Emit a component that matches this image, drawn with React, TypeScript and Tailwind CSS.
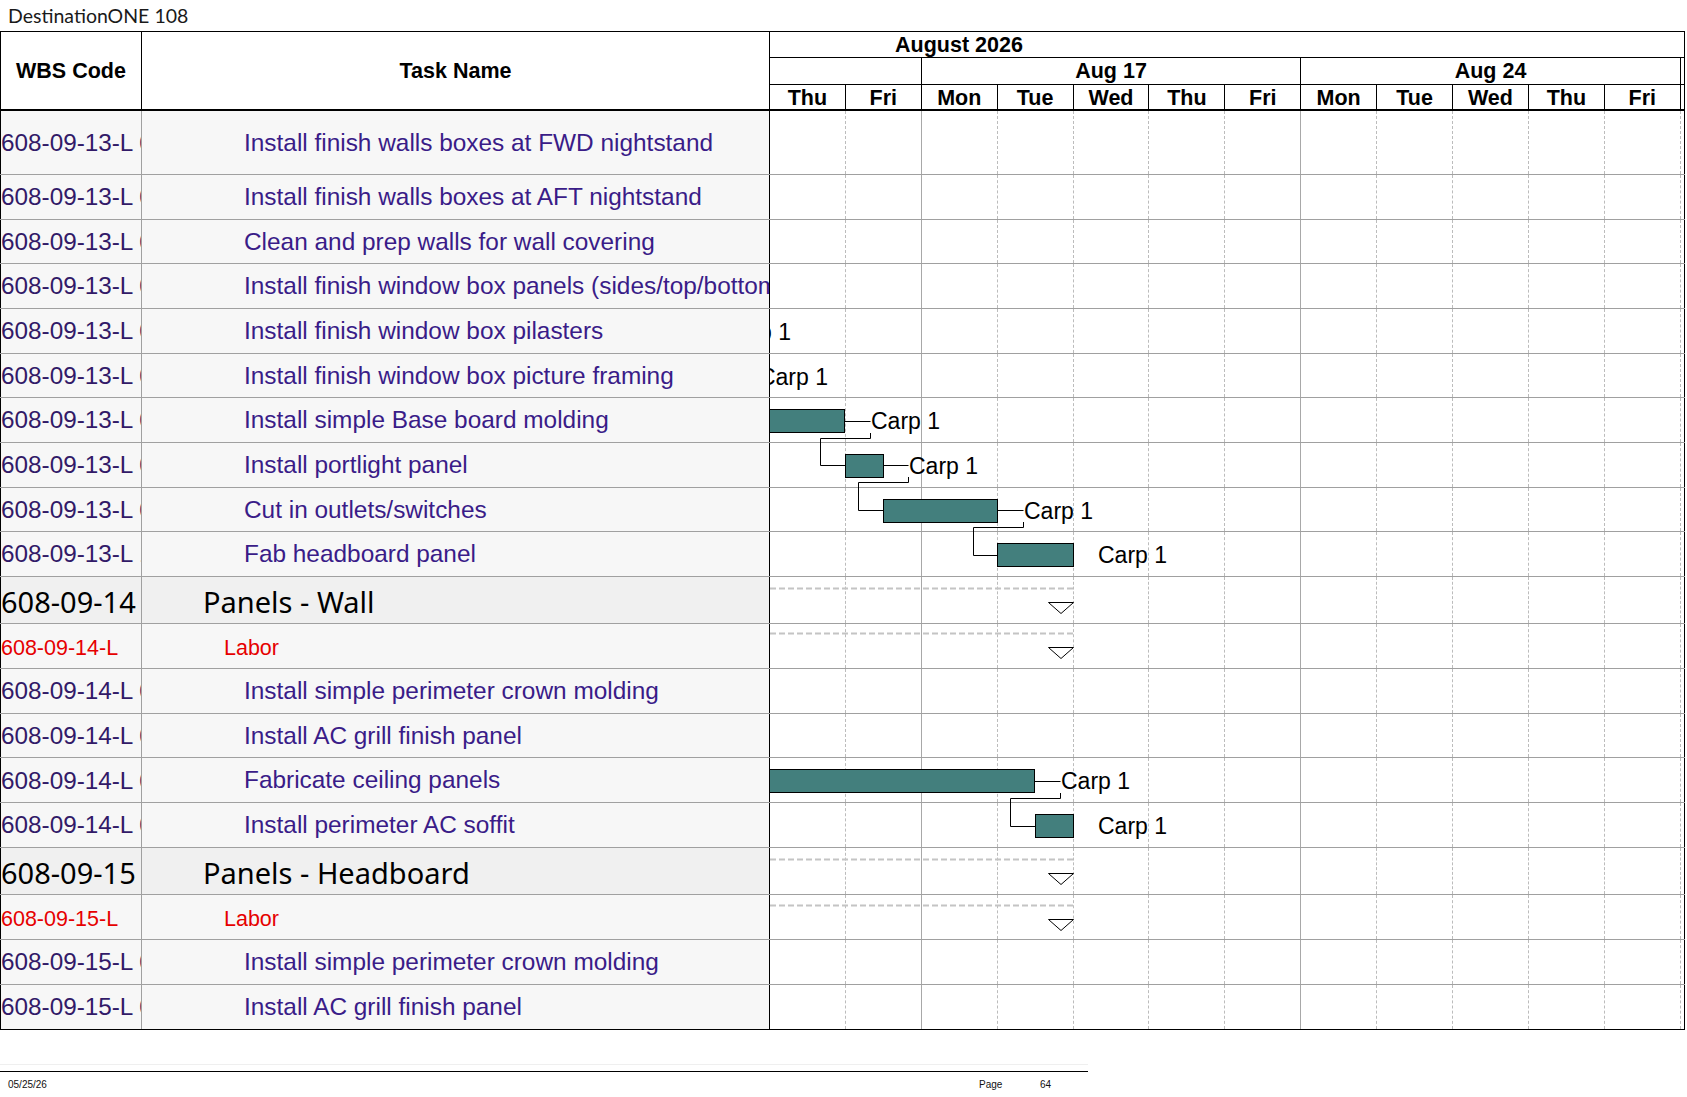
import React from 'react';

type Kind = 'task' | 'sum' | 'labor';

interface Row {
  wbs: string;
  task: string;
  kind: Kind;
  h: number;
  hc: string;
}

const ROWS: Row[] = [
  { wbs: '608-09-13-L 001', task: 'Install finish walls boxes at FWD nightstand', kind: 'task', h: 64, hc: 'h-[64px]' },
  { wbs: '608-09-13-L 002', task: 'Install finish walls boxes at AFT nightstand', kind: 'task', h: 44.67, hc: 'h-[44.67px]' },
  { wbs: '608-09-13-L 003', task: 'Clean and prep walls for wall covering', kind: 'task', h: 44.67, hc: 'h-[44.67px]' },
  { wbs: '608-09-13-L 004', task: 'Install finish window box panels (sides/top/bottom)', kind: 'task', h: 44.67, hc: 'h-[44.67px]' },
  { wbs: '608-09-13-L 005', task: 'Install finish window box pilasters', kind: 'task', h: 44.67, hc: 'h-[44.67px]' },
  { wbs: '608-09-13-L 006', task: 'Install finish window box picture framing', kind: 'task', h: 44.67, hc: 'h-[44.67px]' },
  { wbs: '608-09-13-L 007', task: 'Install simple Base board molding', kind: 'task', h: 44.67, hc: 'h-[44.67px]' },
  { wbs: '608-09-13-L 008', task: 'Install portlight panel', kind: 'task', h: 44.67, hc: 'h-[44.67px]' },
  { wbs: '608-09-13-L 009', task: 'Cut in outlets/switches', kind: 'task', h: 44.67, hc: 'h-[44.67px]' },
  { wbs: '608-09-13-L 100', task: 'Fab headboard panel', kind: 'task', h: 44.67, hc: 'h-[44.67px]' },
  { wbs: '608-09-14', task: 'Panels - Wall', kind: 'sum', h: 47, hc: 'h-[47px]' },
  { wbs: '608-09-14-L', task: 'Labor', kind: 'labor', h: 44.8, hc: 'h-[44.8px]' },
  { wbs: '608-09-14-L 001', task: 'Install simple perimeter crown molding', kind: 'task', h: 44.8, hc: 'h-[44.8px]' },
  { wbs: '608-09-14-L 002', task: 'Install AC grill finish panel', kind: 'task', h: 44.8, hc: 'h-[44.8px]' },
  { wbs: '608-09-14-L 003', task: 'Fabricate ceiling panels', kind: 'task', h: 44.8, hc: 'h-[44.8px]' },
  { wbs: '608-09-14-L 004', task: 'Install perimeter AC soffit', kind: 'task', h: 44.8, hc: 'h-[44.8px]' },
  { wbs: '608-09-15', task: 'Panels - Headboard', kind: 'sum', h: 47, hc: 'h-[47px]' },
  { wbs: '608-09-15-L', task: 'Labor', kind: 'labor', h: 45, hc: 'h-[45px]' },
  { wbs: '608-09-15-L 001', task: 'Install simple perimeter crown molding', kind: 'task', h: 45, hc: 'h-[45px]' },
  { wbs: '608-09-15-L 002', task: 'Install AC grill finish panel', kind: 'task', h: 45, hc: 'h-[45px]' },
];

const DAYS = ['Thu', 'Fri', 'Mon', 'Tue', 'Wed', 'Thu', 'Fri', 'Mon', 'Tue', 'Wed', 'Thu', 'Fri'];

// row centres for the gantt overlay
const centers: number[] = [];
let acc = 0;
ROWS.forEach((r) => {
  centers.push(acc + r.h / 2);
  acc += r.h;
});
const BODY_H = acc;

const BAR = '#437f7d';
const FONT = 'Liberation Sans, Arial, sans-serif';

function Bar({ x1, x2, cy }: { x1: number; x2: number; cy: number }) {
  return <rect x={x1 + 0.5} y={Math.round(cy - 11.5) + 0.5} width={x2 - x1} height={23} fill={BAR} stroke="#000" strokeWidth={1} />;
}

function Label({ x, cy, anchor }: { x: number; cy: number; anchor?: 'end' }) {
  return (
    <text x={x} y={cy + 8.5} fontSize={23} fontFamily={FONT} fill="#000" textAnchor={anchor ?? 'start'}>
      Carp 1
    </text>
  );
}

// label tail + finish-to-start link to the next bar
function Link({ x2, lx, cy, ny, nx }: { x2: number; lx: number; cy: number; ny: number; nx: number }) {
  const y = Math.round(cy) + 0.5;
  const d = Math.round(cy + 17) + 0.5;
  const n = Math.round(ny) + 0.5;
  return (
    <>
      <line x1={x2} x2={lx} y1={y} y2={y} stroke="#000" strokeWidth={1} />
      <polyline
        points={`${lx},${Math.round(cy + 12)} ${lx},${d} ${lx - 50},${d} ${lx - 50},${n} ${nx},${n}`}
        fill="none"
        stroke="#000"
        strokeWidth={1}
      />
    </>
  );
}

function Summary({ cy }: { cy: number }) {
  const top = Math.round(cy + 1) + 0.5;
  return (
    <>
      <line x1={0} x2={303} y1={Math.round(cy - 13) + 0.5} y2={Math.round(cy - 13) + 0.5} stroke="#c4c4c4" strokeWidth={2} strokeDasharray="6 3" />
      <polygon points={`278.5,${top} 303.5,${top} 291,${top + 11}`} fill="#fff" stroke="#000" strokeWidth={1} />
    </>
  );
}

function Gantt() {
  const c = centers;
  return (
    <svg className="absolute left-[770px] top-0 pointer-events-none overflow-hidden" width={914} height={BODY_H}>
      {/* labels of bars that started before the visible range */}
      <Label x={21} cy={c[4]} anchor="end" />
      <Label x={58} cy={c[5]} anchor="end" />

      <Bar x1={-6} x2={74} cy={c[6]} />
      <Link x2={75} lx={100.5} cy={c[6]} ny={c[7]} nx={75} />
      <Label x={101} cy={c[6]} />

      <Bar x1={75} x2={113} cy={c[7]} />
      <Link x2={114} lx={138.5} cy={c[7]} ny={c[8]} nx={113} />
      <Label x={139} cy={c[7]} />

      <Bar x1={113} x2={227} cy={c[8]} />
      <Link x2={228} lx={253.5} cy={c[8]} ny={c[9]} nx={227} />
      <Label x={254} cy={c[8]} />

      <Bar x1={227} x2={303} cy={c[9]} />
      <Label x={328} cy={c[9]} />

      <Summary cy={c[10]} />
      <Summary cy={c[11]} />

      <Bar x1={-6} x2={264} cy={c[14]} />
      <Link x2={265} lx={290.5} cy={c[14]} ny={c[15]} nx={265} />
      <Label x={291} cy={c[14]} />

      <Bar x1={265} x2={303} cy={c[15]} />
      <Label x={328} cy={c[15]} />

      <Summary cy={c[16]} />
      <Summary cy={c[17]} />
    </svg>
  );
}

function DayGrid() {
  return (
    <div className="flex h-full">
      {DAYS.map((d, i) => (
        <div
          key={i}
          className={
            i === 1 || i === 6
              ? 'w-[75.9px] h-full shrink-0 border-r border-[#a8a8a8]'
              : 'w-[75.9px] h-full shrink-0 border-r border-dashed border-[#bcbcbc]'
          }
        />
      ))}
    </div>
  );
}

function BodyRow({ row, last }: { row: Row; last: boolean }) {
  const leftBg = row.kind === 'sum' ? 'bg-[#f0f0f0]' : 'bg-[#f7f7f7]';
  const wbsText =
    row.kind === 'sum'
      ? "pt-[4px] text-[29px] text-black font-['Noto_Sans',sans-serif]"
      : row.kind === 'labor'
        ? 'pt-[6px] text-[21.5px] text-[#e60000]'
        : 'pt-[1px] text-[24.3px] text-[#321a68]';
  const taskText =
    row.kind === 'sum'
      ? "pt-[4px] pl-[61px] text-[29px] text-black font-['Noto_Sans',sans-serif]"
      : row.kind === 'labor'
        ? 'pt-[6px] pl-[82px] text-[21.5px] text-[#e60000]'
        : 'pt-[1px] pl-[102px] text-[24.4px] text-[#3a1c88]';
  return (
    <div className={`flex ${row.hc} border-b ${last ? 'border-black' : 'border-[#a0a0a0]'}`}>
      <div className={`w-[142px] shrink-0 flex items-center overflow-hidden whitespace-nowrap border-l border-l-black border-r border-r-[#a0a0a0] leading-none ${leftBg} ${wbsText}`}>
        {row.wbs}
      </div>
      <div className={`w-[628px] shrink-0 flex items-center overflow-hidden whitespace-nowrap border-r border-r-black leading-none ${leftBg} ${taskText}`}>
        {row.task}
      </div>
      <div className="w-[915px] shrink-0 border-r border-r-black bg-white">
        <DayGrid />
      </div>
    </div>
  );
}

function Header() {
  return (
    <div className="flex h-[79px] border-b-2 border-black text-[21.5px] font-bold text-black leading-none">
      <div className="w-[142px] shrink-0 flex items-center justify-center pt-[2px] border-l border-r border-black">WBS Code</div>
      <div className="w-[628px] shrink-0 flex items-center justify-center pt-[2px] border-r border-black">Task Name</div>
      <div className="w-[915px] shrink-0 flex flex-col border-r border-black">
        <div className="h-[26px] flex items-center pl-[125px] pt-[2px] border-b border-black">August 2026</div>
        <div className="h-[27px] flex border-b border-black">
          <div className="w-[151.8px] shrink-0 border-r border-black" />
          <div className="w-[379.5px] shrink-0 flex items-center justify-center pt-[2px] border-r border-black">Aug 17</div>
          <div className="w-[379.5px] shrink-0 flex items-center justify-center pt-[2px] border-r border-black">Aug 24</div>
        </div>
        <div className="flex-1 flex">
          {DAYS.map((d, i) => (
            <div key={i} className="w-[75.9px] shrink-0 flex items-center justify-center pt-[3px] border-r border-black">
              {d}
            </div>
          ))}
        </div>
      </div>
    </div>
  );
}

export default function App() {
  return (
    <div className="w-[1687px] h-[1097px] bg-white overflow-hidden font-['Liberation_Sans',Arial,sans-serif]">
      <div className="h-[31px] flex items-center pl-[8px] text-[19.5px] font-normal text-[#1a1a1a] leading-none font-['Lato',sans-serif]">
        DestinationONE 108
      </div>

      <div className="w-[1685px] border-t border-black">
        <Header />
        <div className="relative">
          {ROWS.map((r, i) => (
            <BodyRow key={i} row={r} last={i === ROWS.length - 1} />
          ))}
          <Gantt />
        </div>
      </div>

      {/* page footer */}
      <div className="mt-[34px] w-[1088px] h-px bg-[#efefef]" />
      <div className="mt-[6px] w-[1088px] h-px bg-black" />
      <div className="mt-[7px] flex text-[10px] leading-[12px] text-[#111]">
        <span className="w-[979px] pl-[8px]">05/25/26</span>
        <span className="w-[61px]">Page</span>
        <span>64</span>
      </div>
    </div>
  );
}
